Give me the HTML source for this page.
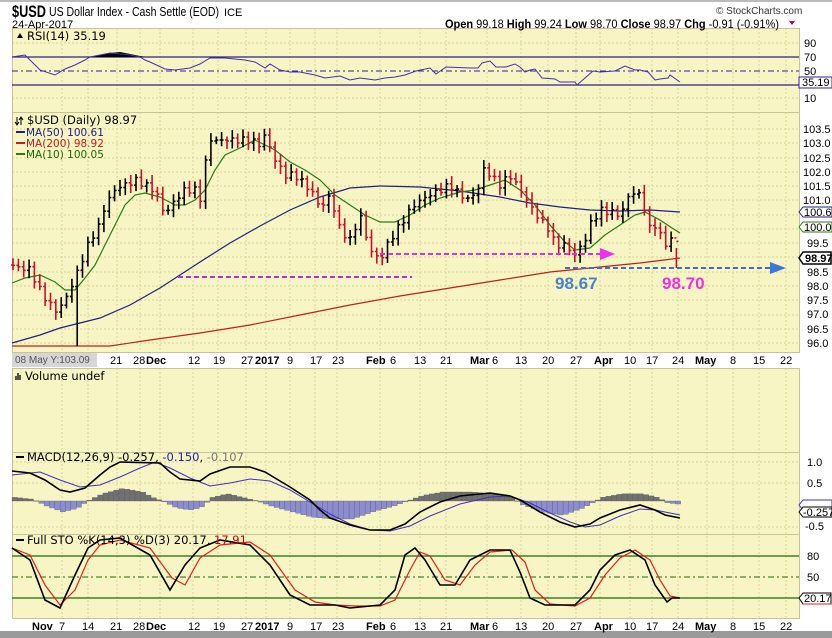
<!DOCTYPE html>
<html><head><meta charset="utf-8">
<style>
html,body{margin:0;padding:0;background:#fff;}
body{width:832px;height:638px;overflow:hidden;position:relative;font-family:"Liberation Sans",sans-serif;}
svg{position:absolute;left:0;top:0;}
</style></head>
<body>
<svg width="832" height="638" viewBox="0 0 832 638" xmlns="http://www.w3.org/2000/svg" font-family="Liberation Sans, sans-serif">
<rect x="0" y="0" width="832" height="2" fill="#bbb"/>
<rect x="12" y="28" width="787" height="324" fill="#f8f5c4"/>
<rect x="12" y="368" width="787" height="250" fill="#f8f5c4"/>
<rect x="12" y="352" width="787" height="16" fill="#fff"/>
<rect x="12" y="352" width="85" height="15" fill="#d6d6d6"/>
<rect x="0" y="631" width="832" height="7" fill="#9a9a9a"/>
<g stroke="#d8d49a" stroke-width="1" stroke-dasharray="2,2">
<path d="M62 28V352M88 28V352M117 28V352M140 28V352M160 28V352M193 28V352M218 28V352M246 28V352M266 28V352M290 28V352M315 28V352M337 28V352M380 28V352M420 28V352M446 28V352M487 28V352M521 28V352M548 28V352M576 28V352M600 28V352M630 28V352M652 28V352M678 28V352M707 28V352M733 28V352M759 28V352M786 28V352"/>
<path d="M62 368V618M88 368V618M117 368V618M140 368V618M160 368V618M193 368V618M218 368V618M246 368V618M266 368V618M290 368V618M315 368V618M337 368V618M380 368V618M420 368V618M446 368V618M487 368V618M521 368V618M548 368V618M576 368V618M600 368V618M630 368V618M652 368V618M678 368V618M707 368V618M733 368V618M759 368V618M786 368V618"/>
<path d="M12 43H799M12 98H799M12 129H799M12 143H799M12 158H799M12 172H799M12 186H799M12 200H799M12 215H799M12 229H799M12 243H799M12 257H799M12 272H799M12 286H799M12 300H799M12 315H799M12 329H799M12 343H799M12 462H799M12 483H799M12 527H799"/>
</g>
<g stroke="#c8c49a" fill="none">
<rect x="12.5" y="28.5" width="787" height="324"/>
<path d="M12 112.5H799M12 452.5H799M12 534.5H799"/>
<rect x="12.5" y="368.5" width="787" height="250"/>
</g>
<text x="12" y="17" font-size="17" font-weight="bold" fill="#000" textLength="34" lengthAdjust="spacingAndGlyphs">$USD</text>
<text x="49" y="16" font-size="12.5" fill="#000" textLength="170" lengthAdjust="spacingAndGlyphs">US Dollar Index - Cash Settle (EOD)</text>
<text x="224" y="16" font-size="11" fill="#000">ICE</text>
<text x="12" y="28" font-size="11" fill="#000">24-Apr-2017</text>
<text x="716" y="14" font-size="10" fill="#333">© StockCharts.com</text>
<text x="445" y="28" font-size="12" fill="#000" textLength="334" lengthAdjust="spacingAndGlyphs"><tspan font-weight="bold">Open</tspan> 99.18 <tspan font-weight="bold">High</tspan> 99.24 <tspan font-weight="bold">Low</tspan> 98.70 <tspan font-weight="bold">Close</tspan> 98.97 <tspan font-weight="bold">Chg</tspan> -0.91 (-0.91%)</text>
<path d="M789 21l6 0l-3 4z" fill="#b0005a"/>
<!-- RSI -->
<path d="M12 57H799M12 85H799" stroke="#302090" stroke-width="1.2"/>
<path d="M12 71H799" stroke="#302090" stroke-dasharray="6,3,2,3"/>
<path d="M90 57L95 56L105 54L110 53L120 52L130 54L140 56L145 57Z" fill="#000"/>
<polyline fill="none" stroke="#4030b0" stroke-width="1" points="12,57 25,55 30,60 40,70 55,75 65,69 75,65 85,60 90,57 110,53 130,55 140,57 145,60 150,62 165,69 175,70 190,68 200,64 210,58 225,58 245,60 255,62 265,68 270,64 280,70 290,72 300,72 315,75 325,78 340,76 350,80 360,78 375,80 385,78 395,77 405,75 416,71 430,68 436,74 446,67 470,68 478,68 482,63 490,61 496,67 506,67 515,64 520,67 525,72 530,70 535,69 542,78 555,79 560,82 575,82 577,85 585,78 593,71 600,72 615,71 625,66 635,70 640,70 648,72 655,80 660,79 668,78 670,75 680,82"/>
<path d="M17 38l3-5l3 5z" fill="#000"/>
<text x="27" y="40" font-size="11.5" font-family="DejaVu Sans, sans-serif" fill="#000">RSI(14) 35.19</text>
<g font-size="11" fill="#000">
<text x="804" y="47">90</text><text x="804" y="61">70</text><text x="804" y="75">50</text><text x="804" y="102">10</text>
</g>
<rect x="799" y="77" width="33" height="11" fill="#fff" stroke="#302090"/>
<text x="802" y="86" font-size="11" fill="#000">35.19</text>
<!-- price panel -->
<g font-size="11" fill="#000">
<text x="803" y="133">103.5</text><text x="803" y="147">103.0</text><text x="803" y="162">102.5</text><text x="803" y="176">102.0</text><text x="803" y="190">101.5</text><text x="803" y="204">101.0</text><text x="807" y="247">99.5</text><text x="807" y="290">98.0</text><text x="807" y="304">97.5</text><text x="807" y="318">97.0</text><text x="807" y="333">96.5</text><text x="807" y="347">96.0</text><text x="807" y="276">98.5</text>
</g>
<polyline fill="none" stroke="#c02020" stroke-width="1.2" points="12,346 110,346 150,340 200,333 250,325 300,315 350,305 400,296 450,288 500,280 550,272 600,267 640,263 680,258"/>
<polyline fill="none" stroke="#202080" stroke-width="1.2" points="12,343 40,335 60,328 100,318 130,305 160,288 200,262 230,243 260,226 290,210 320,197 350,188 380,186 420,187 460,191 500,197 530,203 560,207 590,210 620,211 650,210 680,212"/>
<polyline fill="none" stroke="#2a7a1a" stroke-width="1.2" points="12,283 25,278 40,275 55,282 65,290 75,290 85,278 95,265 105,245 115,225 125,205 135,195 145,193 160,197 175,205 185,205 195,200 205,190 215,170 225,155 240,148 255,140 265,145 275,150 290,162 305,170 320,180 335,195 350,205 365,215 380,222 395,222 410,215 425,205 440,198 460,192 475,190 490,185 505,180 520,190 535,205 550,225 565,242 575,250 590,248 605,235 620,225 635,215 645,212 660,220 672,228 680,233"/>
<g id="bars" stroke-width="1.6" fill="none"></g>
<path d="M178 277H412" stroke="#b030e0" stroke-width="2" stroke-dasharray="5,3"/>
<path d="M380 254H600" stroke="#e030d0" stroke-width="2" stroke-dasharray="5,3"/>
<path d="M600 248L615 254L600 260Z" fill="#f030f0"/>
<path d="M565 268H770" stroke="#3a70c0" stroke-width="2" stroke-dasharray="5,3"/>
<path d="M770 262L786 268L770 274Z" fill="#3a78d8"/>
<text x="555" y="289" font-size="17" font-weight="bold" fill="#4a80d0">98.67</text>
<text x="662" y="289" font-size="17" font-weight="bold" fill="#f030e0">98.70</text>
<path d="M17 117V125M15 122l2 3l2-3M21 117V125M19 120l2-3l2 3" stroke="#000" fill="none"/>
<text x="27" y="124" font-size="11.5" font-family="DejaVu Sans, sans-serif" fill="#000">$USD (Daily) 98.97</text>
<path d="M16 132H25" stroke="#202080" stroke-width="2"/><text x="26" y="136" font-size="10.5" font-family="DejaVu Sans, sans-serif" fill="#202080">MA(50) 100.61</text>
<path d="M16 143H25" stroke="#c02020" stroke-width="2"/><text x="26" y="147" font-size="10.5" font-family="DejaVu Sans, sans-serif" fill="#c02020">MA(200) 98.92</text>
<path d="M16 154H25" stroke="#2a7a1a" stroke-width="2"/><text x="26" y="158" font-size="10.5" font-family="DejaVu Sans, sans-serif" fill="#1a6a0a">MA(10) 100.05</text>
<path d="M799 212l4-5h29v10h-29z" fill="#fff" stroke="#202080"/><text x="804" y="216" font-size="11" fill="#000">100.61</text>
<path d="M799 227l4-5h29v10h-29z" fill="#fff" stroke="#2a7a1a"/><text x="804" y="231" font-size="11" fill="#000">100.05</text>
<path d="M799 258l4-6h28v12h-28z" fill="#fff" stroke="#000" stroke-width="1.5"/><text x="805" y="262" font-size="11" font-weight="bold" fill="#000">98.97</text>
<text x="15" y="363" font-size="10" fill="#555">08 May Y:103.09</text>
<g font-size="11" fill="#000">
<text x="110" y="364">21</text><text x="133" y="364">28</text><text x="146" y="364" font-weight="bold">Dec</text><text x="188" y="364">12</text><text x="213" y="364">19</text><text x="241" y="364">27</text><text x="255" y="364" font-weight="bold">2017</text><text x="287" y="364">9</text><text x="310" y="364">17</text><text x="332" y="364">23</text><text x="366" y="364" font-weight="bold">Feb</text><text x="390" y="364">6</text><text x="414" y="364">13</text><text x="440" y="364">21</text><text x="470" y="364" font-weight="bold">Mar</text><text x="492" y="364">6</text><text x="515" y="364">13</text><text x="542" y="364">20</text><text x="570" y="364">27</text><text x="594" y="364" font-weight="bold">Apr</text><text x="624" y="364">10</text><text x="646" y="364">17</text><text x="672" y="364">24</text><text x="695" y="364" font-weight="bold">May</text><text x="730" y="364">8</text><text x="753" y="364">15</text><text x="780" y="364">22</text>
</g>
<g font-size="11" fill="#000" transform="translate(0,266)">
<text x="32" y="364" font-weight="bold">Nov</text><text x="59" y="364">7</text><text x="82" y="364">14</text>
<text x="110" y="364">21</text><text x="133" y="364">28</text><text x="146" y="364" font-weight="bold">Dec</text><text x="188" y="364">12</text><text x="213" y="364">19</text><text x="241" y="364">27</text><text x="255" y="364" font-weight="bold">2017</text><text x="287" y="364">9</text><text x="310" y="364">17</text><text x="332" y="364">23</text><text x="366" y="364" font-weight="bold">Feb</text><text x="390" y="364">6</text><text x="414" y="364">13</text><text x="440" y="364">21</text><text x="470" y="364" font-weight="bold">Mar</text><text x="492" y="364">6</text><text x="515" y="364">13</text><text x="542" y="364">20</text><text x="570" y="364">27</text><text x="594" y="364" font-weight="bold">Apr</text><text x="624" y="364">10</text><text x="646" y="364">17</text><text x="672" y="364">24</text><text x="695" y="364" font-weight="bold">May</text><text x="730" y="364">8</text><text x="753" y="364">15</text><text x="780" y="364">22</text>
</g>
<path d="M16 380v-4M18 380v-7M20 380v-5" stroke="#000" stroke-width="1.3"/>
<text x="25" y="380" font-size="11.5" font-family="DejaVu Sans, sans-serif" fill="#000">Volume undef</text>
<!-- MACD -->
<path d="M16 457H24" stroke="#000" stroke-width="2"/>
<text x="27" y="461" font-size="11.5" font-family="DejaVu Sans, sans-serif" fill="#000">MACD(12,26,9) -0.257, <tspan fill="#2020a0">-0.150</tspan>, <tspan fill="#777">-0.107</tspan></text>
<g id="hist"></g>
<polyline fill="none" stroke="#4030c0" stroke-width="1" points="12,475 40,472 60,480 80,487 100,485 120,477 140,468 155,462 170,468 190,478 210,486 230,483 250,479 270,481 290,490 310,502 330,514 350,524 370,530 390,531 410,526 430,516 460,504 490,497 510,496 530,503 550,513 570,522 585,527 600,525 620,516 640,509 655,510 670,513 680,515"/>
<polyline fill="none" stroke="#000" stroke-width="1.6" points="12,471 30,473 45,480 60,490 70,492 85,488 100,475 110,467 120,462 160,463 170,472 180,479 200,481 210,474 230,467 250,467 265,472 275,478 290,487 310,500 320,510 330,518 350,525 370,530 390,530 405,524 420,512 440,502 460,496 490,493 510,496 520,500 540,512 560,522 575,527 590,524 600,518 620,510 640,505 655,510 665,515 680,518"/>
<g font-size="11" fill="#000"><text x="807" y="466">1.0</text><text x="807" y="487">0.5</text><text x="805" y="530">-0.5</text></g>
<path d="M799 505l4-5h29v10h-29z" fill="#fff" stroke="#4030c0"/>
<path d="M799 512l4-5h29v10h-29z" fill="#fff" stroke="#000"/>
<text x="803" y="516" font-size="11" fill="#000">-0.257</text>
<!-- STO -->
<path d="M12 556H799M12 598H799" stroke="#1a6a0a" stroke-width="1.2"/>
<path d="M12 577H799" stroke="#1a6a0a" stroke-dasharray="6,3,2,3"/>
<polyline fill="none" stroke="#e02020" stroke-width="1.2" points="12,548 30,555 45,585 60,605 75,590 88,560 100,545 120,540 150,548 172,578 185,585 200,558 220,545 250,542 270,555 295,590 315,602 335,605 355,606 380,606 395,600 410,570 420,552 430,556 445,580 460,585 475,565 490,552 512,550 525,562 535,590 550,604 575,606 590,598 605,575 620,558 635,550 650,560 660,580 670,596 680,598"/>
<polyline fill="none" stroke="#000" stroke-width="1.6" points="12,548 30,560 45,600 60,608 75,575 88,548 100,540 120,538 150,555 170,590 185,565 200,548 220,540 250,545 270,565 290,595 310,605 335,605 350,608 380,605 395,590 405,555 415,548 425,560 440,585 455,585 470,560 490,550 510,550 520,572 530,598 545,605 575,605 590,590 600,570 615,555 630,550 645,560 655,585 667,602 672,598 680,598"/>
<path d="M16 540H24" stroke="#000" stroke-width="2"/>
<text x="27" y="544" font-size="11.5" font-family="DejaVu Sans, sans-serif" fill="#000">Full STO %K(14,3) %D(3) 20.17, <tspan fill="#c00000">17.91</tspan></text>
<g font-size="11" fill="#000"><text x="807" y="560">80</text><text x="807" y="581">50</text></g>
<path d="M799 598l4-5h28v11h-28z" fill="#fff" stroke="#000"/>
<path d="M803 604h28" stroke="#e02020"/>
<text x="804" y="602" font-size="11" fill="#000">20.17</text>
</svg>
<script>
(function(){
var kp=[[12,265],[30,270],[40,290],[50,305],[58,312],[70,290],[75,278],[80,265],[90,240],[100,225],[105,205],[115,190],[125,185],[135,180],[145,185],[155,190],[165,215],[175,200],[185,190],[195,190],[200,200],[205,165],[210,140],[230,140],[250,140],[260,145],[265,135],[275,160],[285,175],[295,175],[305,185],[315,195],[320,210],[330,195],[340,230],[350,240],[360,215],[370,250],[380,260],[390,240],[400,225],[410,210],[420,200],[430,195],[440,190],[450,185],[460,195],[470,200],[480,185],[485,165],[490,175],[500,185],[510,175],[520,190],[530,205],[540,220],[550,230],[555,245],[565,245],[575,255],[585,240],[590,225],[600,210],[610,212],[620,215],[625,205],[630,192],[640,195],[645,210],[650,230],[655,225],[660,235],[665,245],[670,240],[675,235],[680,258]];
function yAt(x){for(var i=1;i<kp.length;i++){if(x<=kp[i][0]){var a=kp[i-1],b=kp[i];return a[1]+(b[1]-a[1])*(x-a[0])/(b[0]-a[0]);}}return kp[kp.length-1][1];}
var g=document.getElementById('bars'),ns='http://www.w3.org/2000/svg',prev=yAt(12);
for(var x=13;x<=681;x+=5.35){var c=yAt(x)+((Math.sin(x*1.7)*4)|0);var o=prev;var hi=Math.min(o,c)-3-Math.abs(Math.sin(x*0.9))*5,lo=Math.max(o,c)+3+Math.abs(Math.cos(x*1.3))*5;
if(Math.abs(x-75)<3){lo=346;}if(Math.abs(x-679)<3){lo=268;hi=248;}
var p=document.createElementNS(ns,'path');p.setAttribute('d','M'+x.toFixed(1)+' '+hi.toFixed(1)+'V'+lo.toFixed(1)+'M'+(x-2).toFixed(1)+' '+o.toFixed(1)+'H'+x.toFixed(1)+'M'+x.toFixed(1)+' '+c.toFixed(1)+'H'+(x+2).toFixed(1));
p.setAttribute('stroke',c>o?'#c8102e':'#000');g.appendChild(p);prev=c;}
var hk=[[12,2],[30,1],[45,-3],[60,-6],[75,-4],[85,0],[100,4],[120,7],[140,5],[150,2],[160,0],[175,-4],[190,-5],[200,-3],[210,2],[225,4],[240,2],[255,0],[270,-3],[290,-6],[310,-9],[330,-10],[350,-10],[370,-6],[390,-3],[405,0],[420,3],[440,5],[470,5],[490,4],[510,2],[520,-2],[540,-6],[560,-8],[570,-6],[580,-4],[590,-1],[600,2],[620,4],[640,4],[655,2],[665,-1],[680,-2]];
function hAt(x){for(var i=1;i<hk.length;i++){if(x<=hk[i][0]){var a=hk[i-1],b=hk[i];return a[1]+(b[1]-a[1])*(x-a[0])/(b[0]-a[0]);}}return hk[hk.length-1][1];}
var h=document.getElementById('hist');
for(var x=12;x<=680;x+=5.35){var v=hAt(x)*1.8;var r=document.createElementNS(ns,'rect');var y0=501;
r.setAttribute('x',x.toFixed(1));r.setAttribute('width','5.35');
if(v>=0){r.setAttribute('y',(y0-v).toFixed(1));r.setAttribute('height',Math.max(v,0.5).toFixed(1));r.setAttribute('fill','#707070');}
else{r.setAttribute('y',y0);r.setAttribute('height',(-v).toFixed(1));r.setAttribute('fill','#8c8cd0');}
r.setAttribute('stroke','#555');r.setAttribute('stroke-width','0.3');h.appendChild(r);}
})();
</script>
</body></html>
